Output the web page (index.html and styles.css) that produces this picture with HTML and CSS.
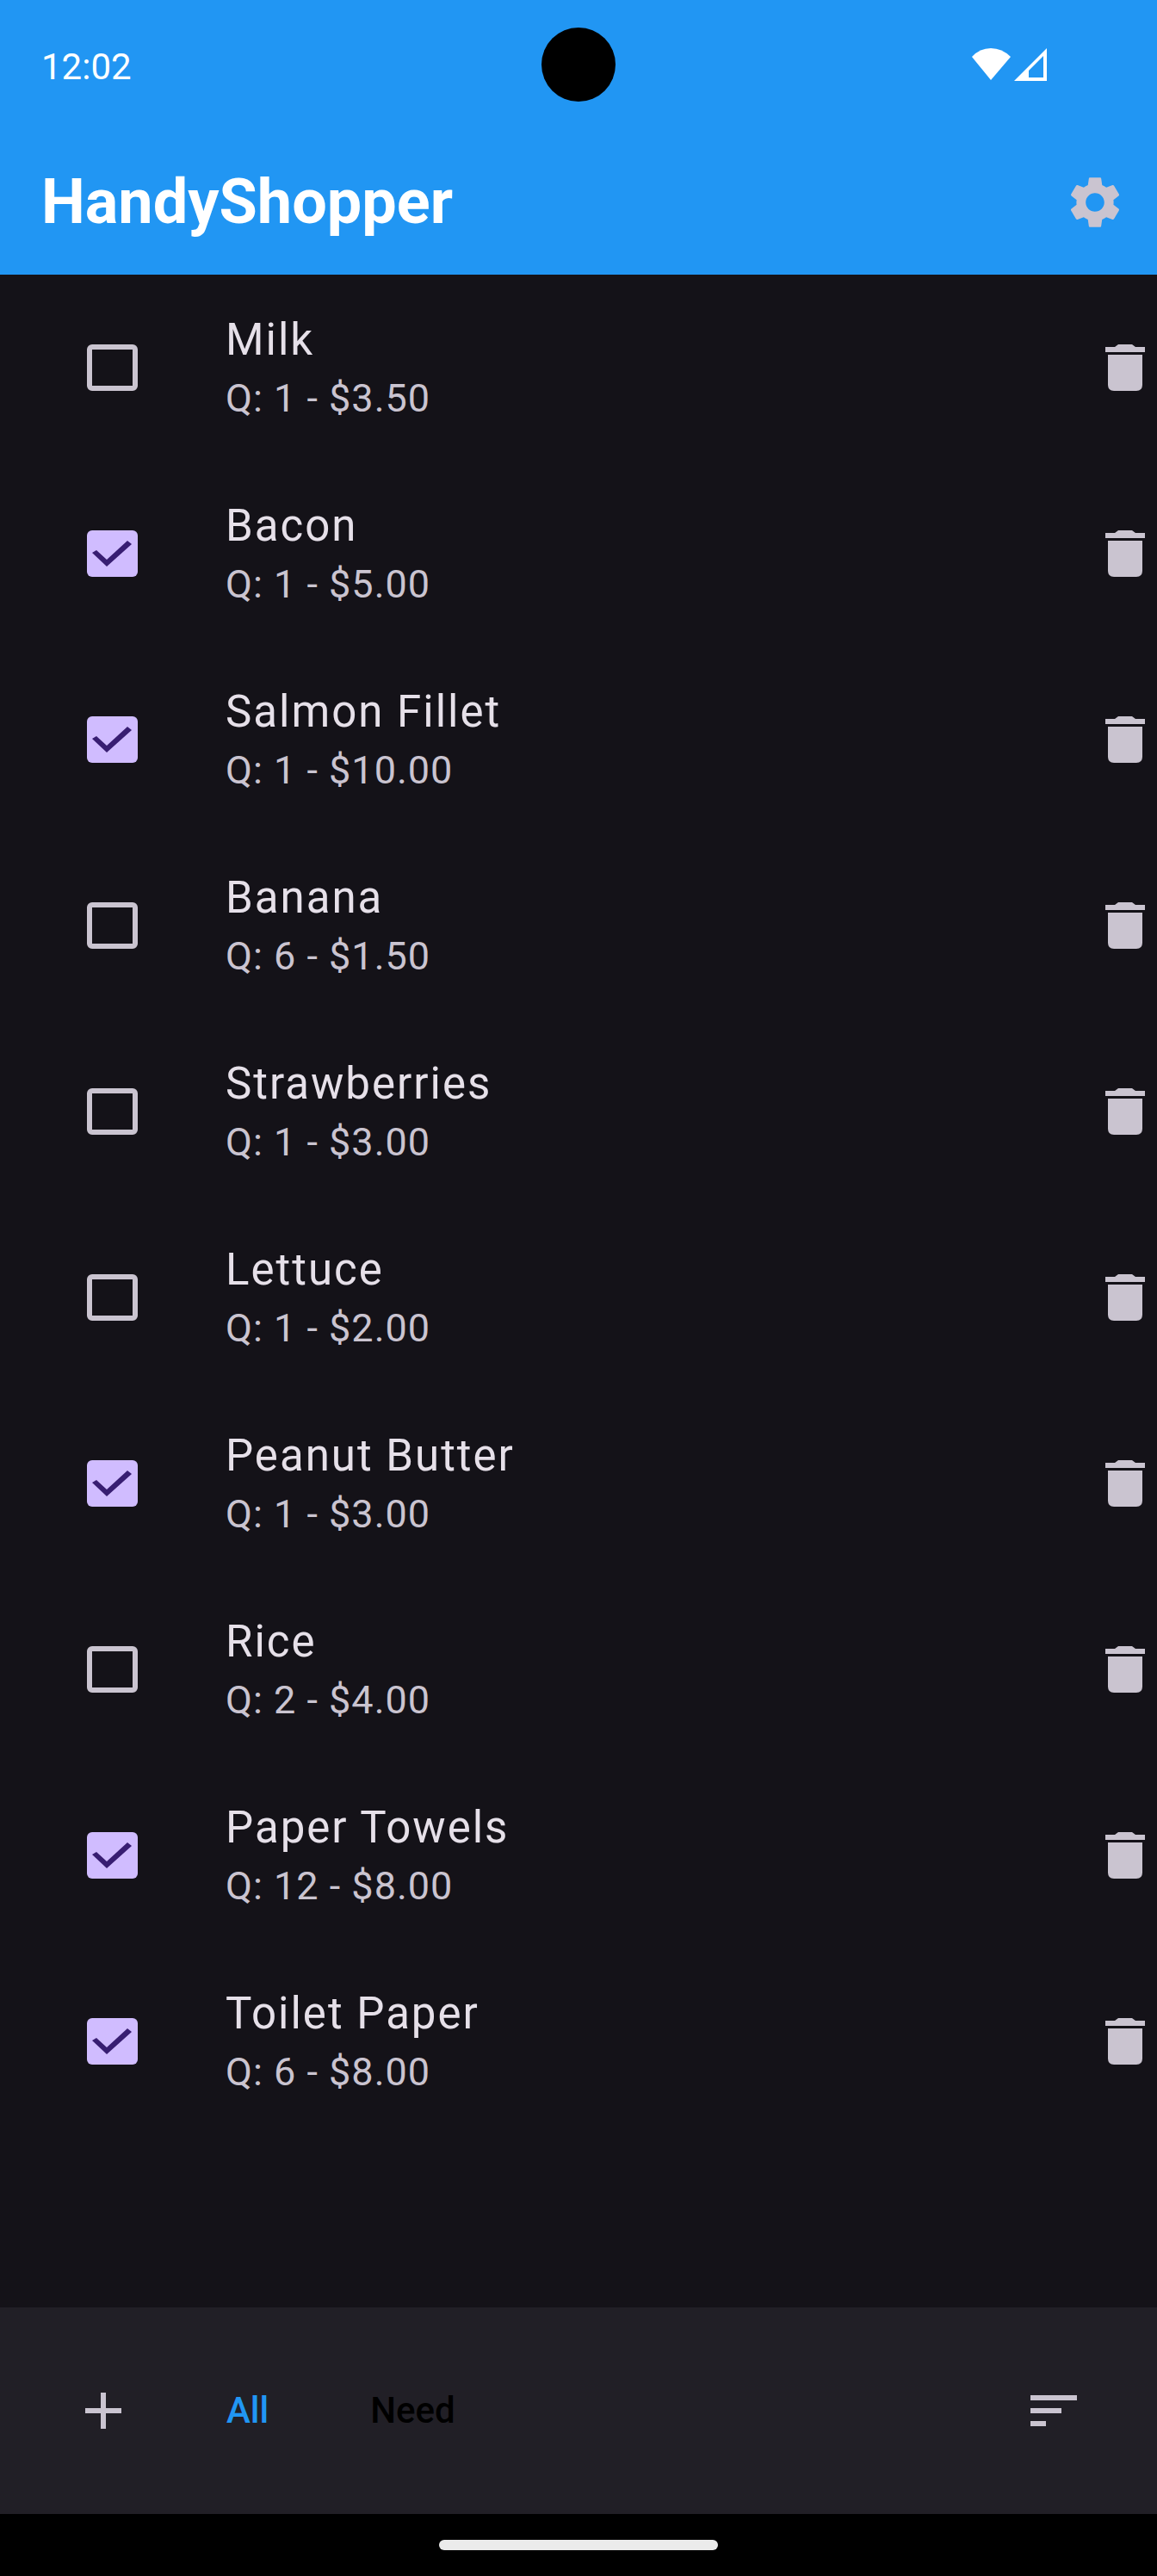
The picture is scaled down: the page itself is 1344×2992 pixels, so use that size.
FILE: index.html
```html
<!DOCTYPE html>
<html lang="en">
<head>
<meta charset="utf-8">
<meta name="viewport" content="width=device-width, initial-scale=1">
<title>HandyShopper</title>
<link rel="stylesheet" href="styles.css">
</head>
<body>
<svg class="sprite" aria-hidden="true">
  <symbol id="trash" viewBox="0 0 46 54">
    <path d="M3 12H43V47Q43 54 36 54H10Q3 54 3 47Z"/>
    <path d="M0 3H11L15 0H31L35 3H46V9H0Z"/>
  </symbol>
</svg>

<header class="header">
  <div class="status-bar">
    <time class="clock">12:02</time>
    <span class="camera"></span>
    <svg class="signals" viewBox="0 0 88 44" role="img" aria-label="Wi-Fi and mobile signal">
      <path d="M0 10Q9 0 22 0T45 10L22 37Z"/>
      <path fill-rule="evenodd" d="M87 0V38H49ZM83 9L66 26V34H83Z"/>
    </svg>
  </div>
  <div class="app-bar">
    <h1 class="title">HandyShopper</h1>
    <button class="icon-button" type="button" aria-label="Settings">
      <svg class="icon" viewBox="0 0 24 24"><path d="M19.14 12.94c.04-.3.06-.61.06-.94 0-.32-.02-.64-.07-.94l2.03-1.58c.18-.14.23-.41.12-.61l-1.92-3.32c-.12-.22-.37-.29-.59-.22l-2.39.96c-.5-.38-1.03-.7-1.62-.94l-.36-2.54c-.04-.24-.24-.41-.48-.41h-3.84c-.24 0-.43.17-.47.41l-.36 2.54c-.59.24-1.13.57-1.62.94l-2.39-.96c-.22-.08-.47 0-.59.22L2.74 8.87c-.12.21-.08.47.12.61l2.03 1.58c-.05.3-.09.63-.09.94s.02.64.07.94l-2.03 1.58c-.18.14-.23.41-.12.61l1.92 3.32c.12.22.37.29.59.22l2.39-.96c.5.38 1.03.7 1.62.94l.36 2.54c.05.24.24.41.48.41h3.84c.24 0 .44-.17.47-.41l.36-2.54c.59-.24 1.13-.56 1.62-.94l2.39.96c.22.08.47 0 .59-.22l1.92-3.32c.12-.22.07-.47-.12-.61l-2.01-1.58zM12 15.6c-1.98 0-3.6-1.62-3.6-3.6s1.62-3.6 3.6-3.6 3.6 1.62 3.6 3.6-1.62 3.6-3.6 3.6z"/></svg>
    </button>
  </div>
</header>

<main class="content">
  <ul class="list">
    <li class="item">
      <input class="check" type="checkbox" id="milk">
      <label class="details" for="milk"><span class="name">Milk</span><span class="price">Q: 1 - $3.50</span></label>
      <button class="delete" type="button" aria-label="Delete Milk"><svg class="trash"><use href="#trash"/></svg></button>
    </li>
    <li class="item">
      <input class="check" type="checkbox" id="bacon" checked>
      <label class="details" for="bacon"><span class="name">Bacon</span><span class="price">Q: 1 - $5.00</span></label>
      <button class="delete" type="button" aria-label="Delete Bacon"><svg class="trash"><use href="#trash"/></svg></button>
    </li>
    <li class="item">
      <input class="check" type="checkbox" id="salmon" checked>
      <label class="details" for="salmon"><span class="name">Salmon Fillet</span><span class="price">Q: 1 - $10.00</span></label>
      <button class="delete" type="button" aria-label="Delete Salmon Fillet"><svg class="trash"><use href="#trash"/></svg></button>
    </li>
    <li class="item">
      <input class="check" type="checkbox" id="banana">
      <label class="details" for="banana"><span class="name">Banana</span><span class="price">Q: 6 - $1.50</span></label>
      <button class="delete" type="button" aria-label="Delete Banana"><svg class="trash"><use href="#trash"/></svg></button>
    </li>
    <li class="item">
      <input class="check" type="checkbox" id="strawberries">
      <label class="details" for="strawberries"><span class="name">Strawberries</span><span class="price">Q: 1 - $3.00</span></label>
      <button class="delete" type="button" aria-label="Delete Strawberries"><svg class="trash"><use href="#trash"/></svg></button>
    </li>
    <li class="item">
      <input class="check" type="checkbox" id="lettuce">
      <label class="details" for="lettuce"><span class="name">Lettuce</span><span class="price">Q: 1 - $2.00</span></label>
      <button class="delete" type="button" aria-label="Delete Lettuce"><svg class="trash"><use href="#trash"/></svg></button>
    </li>
    <li class="item">
      <input class="check" type="checkbox" id="peanut-butter" checked>
      <label class="details" for="peanut-butter"><span class="name">Peanut Butter</span><span class="price">Q: 1 - $3.00</span></label>
      <button class="delete" type="button" aria-label="Delete Peanut Butter"><svg class="trash"><use href="#trash"/></svg></button>
    </li>
    <li class="item">
      <input class="check" type="checkbox" id="rice">
      <label class="details" for="rice"><span class="name">Rice</span><span class="price">Q: 2 - $4.00</span></label>
      <button class="delete" type="button" aria-label="Delete Rice"><svg class="trash"><use href="#trash"/></svg></button>
    </li>
    <li class="item">
      <input class="check" type="checkbox" id="paper-towels" checked>
      <label class="details" for="paper-towels"><span class="name">Paper Towels</span><span class="price">Q: 12 - $8.00</span></label>
      <button class="delete" type="button" aria-label="Delete Paper Towels"><svg class="trash"><use href="#trash"/></svg></button>
    </li>
    <li class="item">
      <input class="check" type="checkbox" id="toilet-paper" checked>
      <label class="details" for="toilet-paper"><span class="name">Toilet Paper</span><span class="price">Q: 6 - $8.00</span></label>
      <button class="delete" type="button" aria-label="Delete Toilet Paper"><svg class="trash"><use href="#trash"/></svg></button>
    </li>
  </ul>
</main>

<footer class="bottom-bar">
  <button class="icon-button" type="button" aria-label="Add item">
    <svg class="icon" viewBox="0 0 24 24"><path d="M19 13h-6v6h-2v-6H5v-2h6V5h2v6h6z"/></svg>
  </button>
  <div class="filters">
    <button class="filter filter-active" type="button">All</button>
    <button class="filter" type="button">Need</button>
  </div>
  <button class="icon-button" type="button" aria-label="Sort">
    <svg class="icon" viewBox="0 0 24 24"><path d="M3 18h6v-2H3zM3 6v2h18V6zm0 7h12v-2H3z"/></svg>
  </button>
</footer>
<div class="gesture-bar"><span class="gesture-handle"></span></div>
</body>
</html>
```
FILE: styles.css
```css
* {
  box-sizing: border-box;
}

body {
  margin: 0;
  min-height: 100vh;
  display: flex;
  flex-direction: column;
  background: #141218;
  color: #e6e0e9;
  font-family: Roboto, "Liberation Sans", sans-serif;
}

button {
  margin: 0;
  padding: 0;
  border: 0;
  background: none;
  font-family: inherit;
  cursor: pointer;
}

svg {
  display: block;
  fill: currentColor;
}

.sprite {
  position: absolute;
  width: 0;
  height: 0;
}

/* Header */
.header {
  background: #2196f3;
  color: #fff;
}

.status-bar {
  position: relative;
  display: flex;
  align-items: center;
  justify-content: space-between;
  height: 151px;
  padding: 4px 127px 0 48px;
}

.clock {
  font-size: 42px;
  line-height: 48px;
}

.camera {
  position: absolute;
  top: 32px;
  left: 50%;
  width: 86px;
  height: 86px;
  margin-left: -43px;
  border-radius: 50%;
  background: #000;
}

.signals {
  width: 88px;
  height: 44px;
}

.app-bar {
  display: flex;
  align-items: center;
  justify-content: space-between;
  height: 168px;
  padding: 0 36px 0 48px;
}

.title {
  margin: 0;
  font-size: 72px;
  line-height: 84px;
  font-weight: 700;
}

.icon-button {
  color: #cac4d0;
}

.icon {
  width: 72px;
  height: 72px;
}

/* Shopping list */
.content {
  flex: 1;
}

.list {
  margin: 0;
  padding: 0;
  list-style: none;
}

.item {
  display: flex;
  align-items: center;
  height: 216px;
  padding: 0 14px 0 101px;
}

.check {
  appearance: none;
  flex: none;
  width: 59px;
  height: 54px;
  margin: 0;
  border: 6px solid #cac4d0;
  border-radius: 6px;
}

.check:checked {
  border: 0;
  background: #d0bcff;
}

.check:checked::before {
  content: "";
  display: block;
  height: 54px;
  background: #381e72;
  clip-path: polygon(6px 26px, 11px 23px, 23px 34px, 47px 12px, 52px 16px, 23px 42px);
}

.details {
  flex: 1;
  display: flex;
  flex-direction: column;
  padding-left: 102px;
}

.name {
  font-size: 51px;
  line-height: 72px;
  letter-spacing: 2px;
}

.price {
  font-size: 45px;
  line-height: 64px;
  letter-spacing: 1px;
  color: #cac4d0;
}

.delete {
  color: #cac4d0;
}

.trash {
  width: 46px;
  height: 54px;
}

/* Bottom bar */
.bottom-bar {
  display: flex;
  align-items: center;
  height: 240px;
  padding: 0 84px;
  background: #211f26;
}

.filters {
  flex: 1;
  display: flex;
  gap: 118px;
  padding-left: 107px;
}

.filter {
  font-size: 42px;
  line-height: 60px;
  font-weight: 500;
  color: #000;
}

.filter-active {
  color: #2196f3;
}

/* System gesture area */
.gesture-bar {
  display: flex;
  align-items: center;
  justify-content: center;
  height: 72px;
  background: #000;
}

.gesture-handle {
  width: 324px;
  height: 12px;
  border-radius: 6px;
  background: #ebebeb;
}
```
